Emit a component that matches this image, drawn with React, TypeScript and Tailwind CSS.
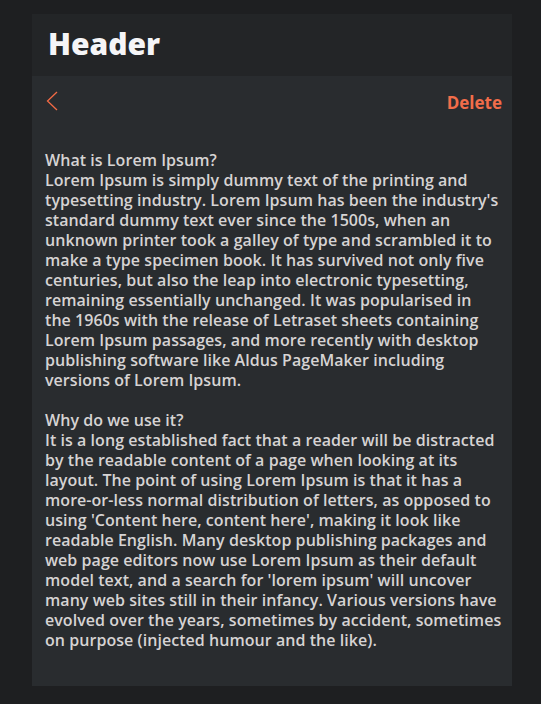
import React from "react";

const lines1 = [
  "What is Lorem Ipsum?",
  "Lorem Ipsum is simply dummy text of the printing and",
  "typesetting industry. Lorem Ipsum has been the industry's",
  "standard dummy text ever since the 1500s, when an",
  "unknown printer took a galley of type and scrambled it to",
  "make a type specimen book. It has survived not only five",
  "centuries, but also the leap into electronic typesetting,",
  "remaining essentially unchanged. It was popularised in",
  "the 1960s with the release of Letraset sheets containing",
  "Lorem Ipsum passages, and more recently with desktop",
  "publishing software like Aldus PageMaker including",
  "versions of Lorem Ipsum.",
];
const lines2 = [
  "Why do we use it?",
  "It is a long established fact that a reader will be distracted",
  "by the readable content of a page when looking at its",
  "layout. The point of using Lorem Ipsum is that it has a",
  "more-or-less normal distribution of letters, as opposed to",
  "using 'Content here, content here', making it look like",
  "readable English. Many desktop publishing packages and",
  "web page editors now use Lorem Ipsum as their default",
  "model text, and a search for 'lorem ipsum' will uncover",
  "many web sites still in their infancy. Various versions have",
  "evolved over the years, sometimes by accident, sometimes",
  "on purpose (injected humour and the like).",
];

export default function App() {
  return (
    <div
      className="min-h-[704px] w-full bg-[#1e1f21] pt-[14px] pl-[32px]"
      style={{ fontFamily: "'Open Sans', 'Noto Sans', sans-serif" }}
    >
      <div className="w-[480px] flex flex-col">
        <div className="h-[62px] bg-[#232527] flex items-center pl-[16px]">
          <h1 className="text-[30px] font-extrabold text-[#f5f5f7] leading-none mb-[2px]">
            Header
          </h1>
        </div>
        <div className="bg-[#292c2f] h-[610px] pl-[13px] pr-[10px] pt-[14px]">
          <div className="flex items-start justify-between">
            <svg width="14" height="22" viewBox="0 0 14 22" className="ml-[1px]">
              <path d="M11 2 L1.5 11 L11 20" fill="none" stroke="#f26a45" strokeWidth="1.3" />
            </svg>
            <span className="text-[17px] font-bold text-[#f26d4a] mt-[3px] leading-[20px]">Delete</span>
          </div>
          <div className="mt-[37px] text-[16px] leading-[20px] font-semibold tracking-[0.05px] text-[#d6d3d3]">
            {lines1.map((l, i) => (
              <div key={i} className="whitespace-nowrap">{l}</div>
            ))}
            <div className="h-[20px]" />
            {lines2.map((l, i) => (
              <div key={i} className="whitespace-nowrap">{l}</div>
            ))}
          </div>
        </div>
      </div>
    </div>
  );
}
